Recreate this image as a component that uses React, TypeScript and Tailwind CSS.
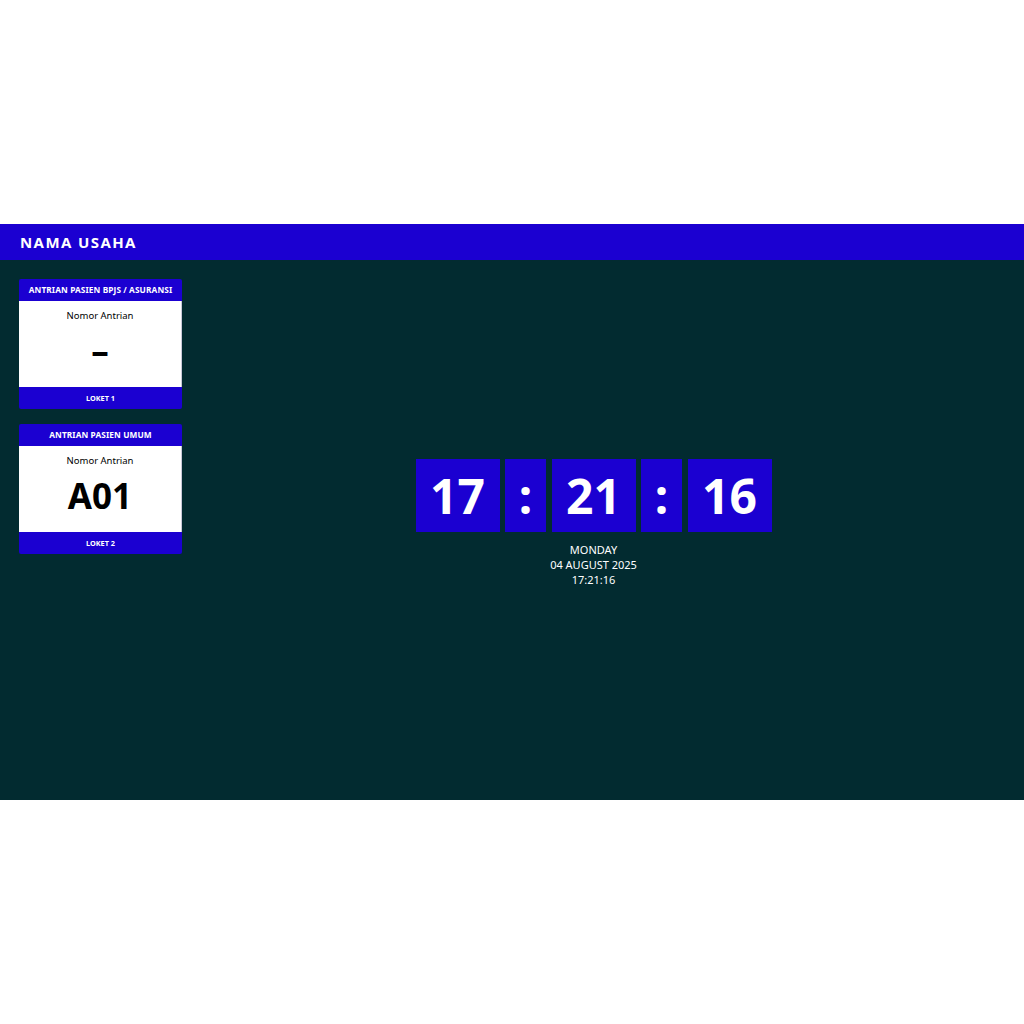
import React from 'react';

const font = { fontFamily: '"Noto Sans", "Open Sans", sans-serif' };

interface QueueCardProps {
  title: string;
  number: string;
  loket: string;
}

function QueueCard({ title, number, loket }: QueueCardProps) {
  return (
    <div className="w-[163px] rounded-[2px] overflow-hidden">
      <div className="h-[22px] bg-[#1b00d1] flex items-center justify-center text-white text-[8.3px] font-bold tracking-[0.1px]">
        {title}
      </div>
      <div className="h-[86px] bg-white border-r border-[#c8c8d8] flex flex-col items-center">
        <div className="mt-[8px] text-[9.5px] leading-[14px] text-black">Nomor Antrian</div>
        <div className="mt-[6px] text-[35px] leading-[44px] font-bold text-black">{number}</div>
      </div>
      <div className="h-[22px] bg-[#1b00d1] flex items-center justify-center text-white text-[7.3px] font-bold">
        {loket}
      </div>
    </div>
  );
}

function ClockBox({ children, wide }: { children: React.ReactNode; wide?: boolean }) {
  return (
    <div
      className={`${wide ? 'w-[84px]' : 'w-[41px]'} h-[73px] bg-[#1b00d1] flex items-center justify-center text-white text-[48px] font-bold leading-none`}
    >
      {children}
    </div>
  );
}

export default function App() {
  return (
    <div className="w-[1024px] h-[1024px] bg-white flex flex-col" style={font}>
      <div className="h-[224px]" />
      <div className="h-[36px] bg-[#1b00d1] flex items-center px-[20px]">
        <span className="text-white text-[15px] font-bold tracking-[1.4px]">NAMA USAHA</span>
      </div>
      <div className="h-[540px] bg-[#022b30] flex px-[19px] py-[19px]">
        <div className="w-[163px] flex flex-col gap-[15px]">
          <QueueCard title="ANTRIAN PASIEN BPJS / ASURANSI" number="–" loket="LOKET 1" />
          <QueueCard title="ANTRIAN PASIEN UMUM" number="A01" loket="LOKET 2" />
        </div>
        <div className="flex-1 flex flex-col items-center justify-center pb-[14px]">
          <div className="flex gap-[5.5px]">
            <ClockBox wide>17</ClockBox>
            <ClockBox>:</ClockBox>
            <ClockBox wide>21</ClockBox>
            <ClockBox>:</ClockBox>
            <ClockBox wide>16</ClockBox>
          </div>
          <div className="mt-[10px] flex flex-col items-center text-white text-[11px] leading-[15px]">
            <div>MONDAY</div>
            <div>04 AUGUST 2025</div>
            <div>17:21:16</div>
          </div>
        </div>
      </div>
      <div className="flex-1" />
    </div>
  );
}
